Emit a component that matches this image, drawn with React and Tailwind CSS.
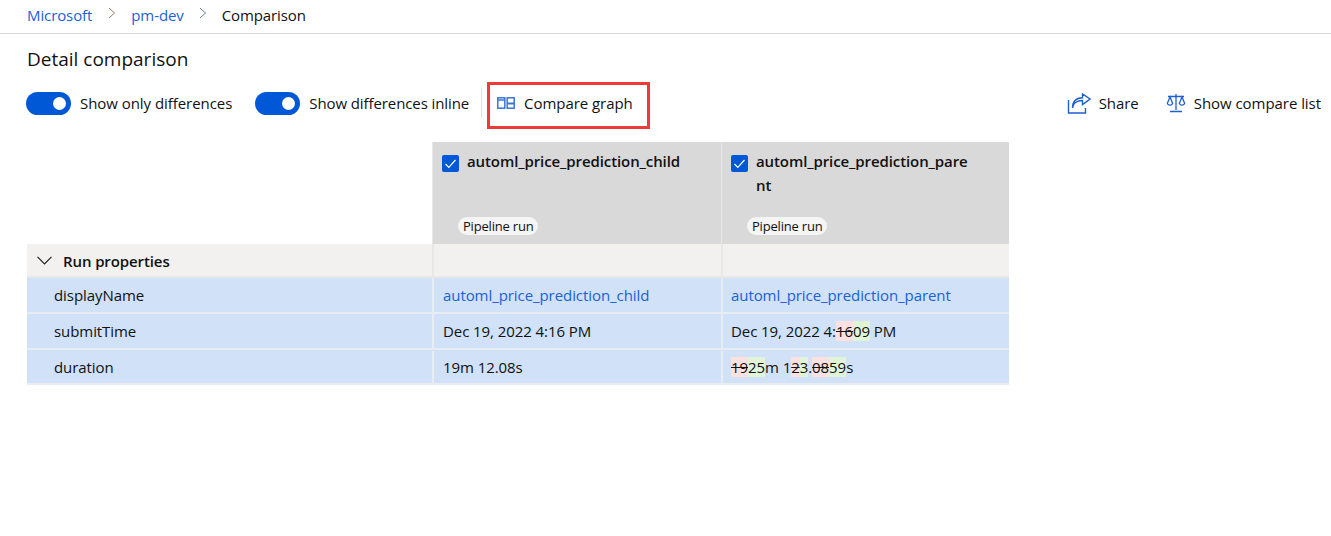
const font = { fontFamily: '"Open Sans", "Noto Sans", sans-serif' };

function Toggle() {
  return (
    <span className="flex h-[23px] w-[45px] items-center justify-end rounded-full bg-[#0058d6] pr-[5px]">
      <span className="h-[13px] w-[13px] rounded-full bg-white" />
    </span>
  );
}

function Check() {
  return (
    <span className="mt-[1px] flex h-[17px] w-[17px] shrink-0 items-center justify-center rounded-[2px] bg-[#0058d6]">
      <svg width="13" height="13" viewBox="0 0 13 13" fill="none" stroke="white" strokeWidth="1.2">
        <path d="M1.5 7l3.3 3.3L11.5 3" />
      </svg>
    </span>
  );
}

function Chevron({ color }) {
  return (
    <svg className="mb-[4px]" width="8" height="12" viewBox="0 0 8 12" fill="none" stroke={color} strokeWidth="1">
      <path d="M1 1l5.5 5L1 11" />
    </svg>
  );
}

function Del({ children }) {
  return <span className="bg-[#fde0e0] line-through">{children}</span>;
}

function Ins({ children }) {
  return <span className="bg-[#e0f5d8]">{children}</span>;
}

function RunHeader({ children }) {
  return (
    <div className="flex flex-col border-l border-[#e6e6e6] bg-[#d9d9d9] pl-[9px] pr-[40px]">
      <div className="flex h-[75px] gap-[8px] pt-[7px]">
        <div className="pt-[5px]">
          <Check />
        </div>
        <div className="break-all text-[15px] font-semibold leading-[24px] tracking-[-0.1px] text-[#111]">
          {children}
        </div>
      </div>
      <div className="ml-[16px] flex">
        <span className="rounded-full bg-[#f5f5f5] px-[5px] text-[13px] leading-[18px] tracking-[-0.2px] text-[#111]">
          Pipeline run
        </span>
      </div>
    </div>
  );
}

function Row({ name, a, b, h = "h-[36px]" }) {
  return (
    <div className={`grid grid-cols-[405px_289px_288px] border-b-2 border-[#e8edf3] bg-[#d0e1f8] text-[15px] tracking-[-0.07px] text-[#111] ${h}`}>
      <div className="flex items-center pl-[27px]">{name}</div>
      <div className="flex items-center border-l-2 border-[#e8edf3] pl-[9px]">{a}</div>
      <div className="flex items-center border-l-2 border-[#e8edf3] pl-[8px]">{b}</div>
    </div>
  );
}

export default function App() {
  return (
    <div style={font} className="h-[536px] w-[1331px] overflow-hidden bg-white text-[#111]">
      <div className="flex h-[34px] items-center border-b border-[#d9d9d9] pb-[3px] pl-[27px] text-[15px] tracking-[-0.1px]">
        <span className="text-[#1a62d6]">Microsoft</span>
        <span className="ml-[16px] mr-[15px]"><Chevron color="#a5785a" /></span>
        <span className="text-[#1a62d6]">pm-dev</span>
        <span className="ml-[15px] mr-[15px]"><Chevron color="#5f7c92" /></span>
        <span>Comparison</span>
      </div>

      <div className="pl-[27px] pt-[11px] text-[19px] leading-[28px]">Detail comparison</div>

      <div className="mt-[6px] flex h-[48px] items-center pl-[26px] text-[15px] tracking-[-0.05px]">
        <Toggle />
        <span className="ml-[9px]">Show only differences</span>
        <span className="ml-[23px]"><Toggle /></span>
        <span className="ml-[9px] tracking-[-0.1px]">Show differences inline</span>
        <div className="ml-[12px] h-[30px] w-px bg-[#e0e0e0]" />
        <div className="ml-[5px] mt-[5px] flex h-[47px] w-[163px] items-center border-[3px] border-[#f03a3a] pb-[5px] pl-[7px]">
          <svg width="18" height="12" viewBox="0 0 18 12" fill="none" stroke="#3f74d6" strokeWidth="1.5">
            <rect x="0.8" y="0.8" width="7" height="10.4" />
            <path d="M0.8 3h7" />
            <rect x="10.2" y="0.8" width="7" height="10.4" />
            <path d="M10.2 6.5h7" strokeWidth="2" />
          </svg>
          <span className="ml-[9px]">Compare graph</span>
        </div>
        <div className="ml-auto flex items-center pr-[10px]">
          <svg width="24" height="21" viewBox="0 0 24 21" fill="none" stroke="#1f5fd0" strokeWidth="1.4">
            <path d="M1.5 7v13h17v-5" />
            <path d="M5.5 15c.5-5 5-7.5 10-7.5V11.5L23 6 15.5 1v3.8C9 5 5.5 9 5.5 15z" />
          </svg>
          <span className="ml-[8px]">Share</span>
          <svg className="ml-[27px]" width="20" height="20" viewBox="0 0 20 20" fill="none" stroke="#1f5fd0" strokeWidth="1.3">
            <path d="M10 1v16M4 18.5h12M2 3.5h16" />
            <path d="M4 4l-2.7 6.5a3 3 0 0 0 5.4 0zM16 4l-2.7 6.5a3 3 0 0 0 5.4 0z" />
          </svg>
          <span className="ml-[8px]">Show compare list</span>
        </div>
      </div>

      <div className="ml-[27px] mt-[15px] w-[982px]">
        <div className="grid h-[102px] grid-cols-[405px_289px_288px]">
          <div />
          <RunHeader>automl_price_prediction_child</RunHeader>
          <RunHeader>automl_price_prediction_parent</RunHeader>
        </div>
        <div className="grid h-[34px] grid-cols-[405px_289px_288px] border-b-2 border-[#e8e8e8] bg-[#f2f1ef] text-[15px] font-semibold tracking-[-0.1px]">
          <div className="flex items-center pl-[10px]">
            <svg width="15" height="9" viewBox="0 0 15 9" fill="none" stroke="#222" strokeWidth="1.2">
              <path d="M0.5 0.8l7 7 7-7" />
            </svg>
            <span className="ml-[11px] pt-[2px]">Run properties</span>
          </div>
          <div className="border-l-2 border-[#e8e8e8]" />
          <div className="border-l-2 border-[#e8e8e8]" />
        </div>
        <Row
          name="displayName"
          a={<span className="text-[#1a62d6]">automl_price_prediction_child</span>}
          b={<span className="text-[#1a62d6]">automl_price_prediction_parent</span>}
        />
        <Row
          name="submitTime"
          a="Dec 19, 2022 4:16 PM"
          b={<span>Dec 19, 2022 4:<Del>16</Del><Ins>09</Ins> PM</span>}
        />
        <Row
          name="duration"
          h="h-[35px] pt-[1px]"
          a="19m 12.08s"
          b={<span><Del>19</Del><Ins>25</Ins>m 1<Del>2</Del><Ins>3</Ins>.<Del>08</Del><Ins>59</Ins>s</span>}
        />
      </div>
    </div>
  );
}
